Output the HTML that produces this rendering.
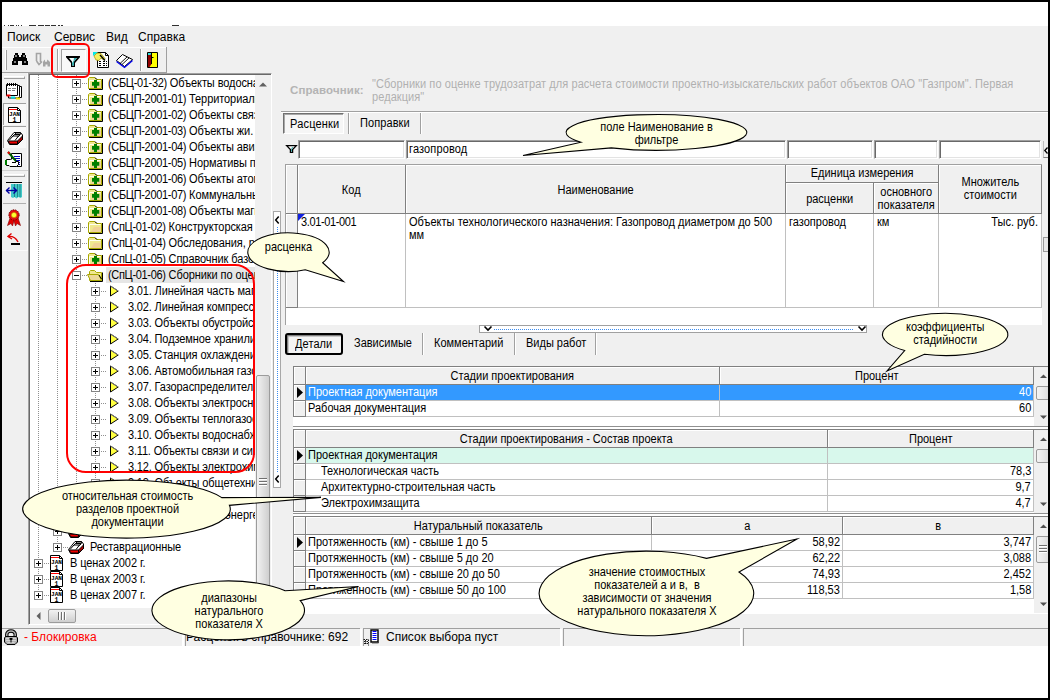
<!DOCTYPE html><html><head><meta charset="utf-8"><title>UI</title><style>
*{box-sizing:border-box;margin:0;padding:0}
html,body{width:1050px;height:700px;overflow:hidden;background:#fff}
body{position:relative;font-family:"Liberation Sans",sans-serif;font-size:11px;color:#000}
.a{position:absolute}
.t{position:absolute;white-space:nowrap;line-height:14px;height:14px}
.g{background:#f0f0f0}
.m{position:absolute;top:30px;font-size:12px;line-height:14px;white-space:nowrap;color:#000}
.tr{position:absolute;height:16px;line-height:16px;white-space:nowrap;font-size:12px;letter-spacing:-.09px;transform:scaleX(.9167);transform-origin:0 0}
.c{position:absolute;border-right:1px solid #c0c0c0;border-bottom:1px solid #c0c0c0;white-space:nowrap;overflow:hidden;line-height:13px;padding:1px 3px 0 3px;background:#fff}
.hd{background:#f0f0f0;text-align:center;padding-left:0;padding-right:0;border-color:#808080;box-shadow:inset 1px 1px 0 #fff}
.r{text-align:right}
.s{display:inline-block;font-size:12px;transform:scaleX(.9167);white-space:nowrap;vertical-align:top}
.x{font-size:12px;transform:scaleX(.9167);transform-origin:0 0}
.inp{position:absolute;background:#fff;border:1px solid #fff;border-top:1px solid #a0a0a0;border-left:1px solid #a0a0a0;box-shadow:inset 1px 1px 0 #696969,inset -1px -1px 0 #e3e3e3;height:19px;top:140px}
.co{position:absolute;text-align:center;line-height:13px;white-space:nowrap;font-size:11px}
svg{position:absolute;overflow:visible}
</style></head><body>
<div class="a g" style="left:2px;top:26px;width:1046px;height:620px"></div>
<div class="a" style="left:4px;top:25px;width:1px;height:1px;background:#303030"></div>
<div class="a" style="left:8px;top:25px;width:1px;height:1px;background:#303030"></div>
<div class="a" style="left:10px;top:25px;width:4px;height:1px;background:#303030"></div>
<div class="a" style="left:16px;top:25px;width:1px;height:1px;background:#303030"></div>
<div class="a" style="left:18px;top:25px;width:1px;height:1px;background:#303030"></div>
<div class="a" style="left:21px;top:25px;width:1px;height:1px;background:#303030"></div>
<div class="a" style="left:29px;top:25px;width:7px;height:1px;background:#303030"></div>
<div class="a" style="left:38px;top:25px;width:6px;height:1px;background:#303030"></div>
<div class="a" style="left:45px;top:25px;width:5px;height:1px;background:#303030"></div>
<div class="a" style="left:51px;top:25px;width:5px;height:1px;background:#303030"></div>
<div class="a" style="left:58px;top:25px;width:2px;height:1px;background:#303030"></div>
<div class="a" style="left:61px;top:25px;width:2px;height:1px;background:#303030"></div>
<div class="a" style="left:172px;top:25px;width:7px;height:1px;background:#303030"></div>
<div class="m" style="left:7px">Поиск</div>
<div class="m" style="left:54px">Сервис</div>
<div class="m" style="left:106px">Вид</div>
<div class="m" style="left:138px">Справка</div>
<div class="a" style="left:2px;top:47px;width:165px;height:1px;background:#fff"></div>
<div class="a" style="left:2px;top:72px;width:165px;height:1px;background:#a0a0a0"></div>
<div class="a" style="left:166px;top:47px;width:1px;height:26px;background:#a0a0a0"></div>
<div class="a" style="left:5px;top:50px;width:2px;height:20px;border-left:1px solid #fff;border-right:1px solid #a0a0a0"></div>
<div class="a" style="left:27px;top:73px;width:1px;height:178px;background:#fafafa"></div>
<div class="a" style="left:2px;top:250px;width:26px;height:1px;background:#fafafa"></div>
<div class="a" style="left:4px;top:76px;width:21px;height:3px;border-top:1px solid #fff;border-bottom:1px solid #a0a0a0;border-right:1px solid #a0a0a0"></div>
<svg class="a" style="left:6px;top:83px" width="17" height="17" viewBox="0 0 17 17" ><path d="M4.5 3.5H15.5V14.5H4.5Z" fill="#fff" stroke="#000"/><path d="M2.5 2.5H13.5V13.5L12 15H2.5Z" fill="#fff" stroke="#000"/><path d="M0.5 1.5H11.5V12.5H0.5Z" fill="#fff" stroke="#000"/><path d="M1.5 0v3M3.5 0v3M5.5 0v3M7.5 0v3M9.5 0v3" stroke="#000"/><path d="M2 5.5h3M6 5.5h4M2 7.5h3M6 7.5h3" stroke="#808080"/><path d="M0.5 11.5h4v2h-4z" fill="#f00000"/><path d="M5 13.5h4v2H5z" fill="#00e0e0"/><path d="M10 14.5h4v2h-4z" fill="#f0e000"/></svg>
<div class="a" style="left:3px;top:103px;width:23px;height:22px;background:#f8f8f8;border-left:1px solid #a0a0a0;border-top:1px solid #a0a0a0"></div>
<svg class="a" style="left:8px;top:107px" width="13" height="16" viewBox="0 0 13 16" ><path d="M0.5 0.5H9.5L12.5 3.5V15.5H0.5Z" fill="#fff" stroke="#000"/><path d="M9.5 0.5V3.5H12.5" fill="none" stroke="#000"/><path d="M1 2.5H9" stroke="#f00"/><text x="6.5" y="9" font-family="Liberation Mono,monospace" font-weight="bold" font-size="6" text-anchor="middle" textLength="11" lengthAdjust="spacingAndGlyphs">JAN</text><text x="6.5" y="14.5" font-family="Liberation Mono,monospace" font-weight="bold" font-size="6.5" text-anchor="middle">1</text></svg>
<div class="a" style="left:3px;top:126px;width:23px;height:22px;background:#f8f8f8;border-left:1px solid #a0a0a0;border-top:1px solid #a0a0a0"></div>
<svg class="a" style="left:7px;top:131px" width="16" height="14" viewBox="0 0 16 14" ><path d="M0.500 9.500L7 1.500h6.500l2 2.500v4.500l-5 5h-8z" fill="#fff" stroke="#000"/><path d="M1 10h9.500v3h-7.500z" fill="#f00000" stroke="#000"/><path d="M10.500 10l5-5v3.500l-5 4.500z" fill="#b00000" stroke="#000"/><path d="M2 9.500L6 5h5.500L8 9.500M5 6L7.500 3.500H13l-2.500 3M7.500 3.500L9 2h5l-2 3" stroke="#000" fill="none"/></svg>
<svg class="a" style="left:6px;top:151px" width="17" height="17" viewBox="0 0 17 17" ><path d="M5.5 2.5H15.5V15.5H5.5Z" fill="#fff" stroke="#000"/><path d="M8 5.5h6M8 7.5h6M8 9.5h6M10 11.5h4M10 13.5h4" stroke="#0000c0"/><path d="M0.5 8.5h4l2-1 3 1v2h3v3l-2 2H4l-1-1H0.5z" fill="#fff" stroke="#000"/><path d="M0 9v5" stroke="#008000" stroke-width="2"/><path d="M2 1l8 9" stroke="#006000" stroke-width="2"/><path d="M2 1l1.5 1.7" stroke="#f00000" stroke-width="2"/><path d="M6 11.5h4" stroke="#000"/></svg>
<div class="a" style="left:2px;top:170px;width:26px;height:1px;background:#d0d0d0"></div>
<div class="a" style="left:4px;top:174px;width:21px;height:3px;border-top:1px solid #fff;border-bottom:1px solid #a0a0a0;border-right:1px solid #a0a0a0"></div>
<svg class="a" style="left:6px;top:181px" width="17" height="18" viewBox="0 0 17 18" ><path d="M0 1.5H16" stroke="#000"/><path d="M5 3H16V16l-1.500 1-2-1-2 1.500-2-1.500-1.500 1-2-1z" fill="#40c8c8"/><path d="M8.500 3v13M11.500 3v13M14 3v13" stroke="#208888"/><path d="M0 9.500H11" stroke="#0000a0" stroke-width="1.4"/><path d="M3.500 6.500L0.500 9.500l3 3M7.500 6.500l3 3-3 3" fill="none" stroke="#0000a0" stroke-width="1.4"/></svg>
<div class="a" style="left:3px;top:203px;width:23px;height:1px;background:#b0b0b0"></div>
<svg class="a" style="left:7px;top:209px" width="14" height="18" viewBox="0 0 14 18" ><path d="M3 9L0.500 16.500l3.500-2 1.500 2.500L7 12l1.500 5 1.500-2.500 3.500 2L11 9z" fill="#e00000" stroke="#800000" stroke-width=".6"/><circle cx="7" cy="6" r="5.200" fill="#e01010" stroke="#700000" stroke-dasharray="1.500 1"/><circle cx="7" cy="6" r="2.600" fill="#ffff30" stroke="#c09000" stroke-width=".6"/></svg>
<svg class="a" style="left:7px;top:232px" width="14" height="14" viewBox="0 0 14 14" ><path d="M1 4.500C5 4 9 6 11 10" fill="none" stroke="#e00000" stroke-width="1.400"/><path d="M4.500 1.500L1 4.500l4 2.500" fill="none" stroke="#e00000" stroke-width="1.400"/><path d="M4 12h9" stroke="#000" stroke-width="2"/></svg>
<div class="a" style="left:28px;top:73px;width:244px;height:552px;background:#fff;border-left:1px solid #a0a0a0;border-top:1px solid #a0a0a0;border-right:1px solid #fff;border-bottom:1px solid #fff;box-shadow:inset 1px 1px 0 #696969"></div>
<div class="a" style="left:30px;top:75px;width:225px;height:533px;overflow:hidden">
<div class="a" style="left:8px;top:0px;width:1px;height:520px;background:repeating-linear-gradient(180deg,#909090 0 1px,transparent 1px 2px)"></div>
<div class="a" style="left:27px;top:0px;width:1px;height:472px;background:repeating-linear-gradient(180deg,#909090 0 1px,transparent 1px 2px)"></div>
<div class="a" style="left:46px;top:0px;width:1px;height:440px;background:repeating-linear-gradient(180deg,#909090 0 1px,transparent 1px 2px)"></div>
<div class="a" style="left:65px;top:208px;width:1px;height:216px;background:repeating-linear-gradient(180deg,#909090 0 1px,transparent 1px 2px)"></div>
<div class="a" style="left:52px;top:8px;width:6px;height:1px;background:repeating-linear-gradient(90deg,#909090 0 1px,transparent 1px 2px)"></div>
<div class="a" style="left:42px;top:4px;width:9px;height:9px;border:1px solid #848484;background:#fff"></div><div class="a" style="left:44px;top:8px;width:5px;height:1px;background:#000"></div><div class="a" style="left:46px;top:6px;width:1px;height:5px;background:#000"></div>
<svg class="a" style="left:58px;top:2px" width="16" height="16" viewBox="0 0 16 16" ><path d="M0.5 11.5V1.5L1.5 0.5H6.5L8.5 2.5H13.5V11.5Z" fill="#f0e890" stroke="#a8a800"/><path d="M1.5 3.5H12.5M1.5 3.5V11" stroke="#fffff0" fill="none"/><path d="M6 6h7v5H3z" fill="#f0b8a0" opacity=".45"/><path d="M7 0.5L9 2.5M14.5 2V12.5H1" fill="none" stroke="#000"/><path d="M6 3h3v2h2.3v3.7H9V11H6V8.7H4V5h2z" fill="#008000"/></svg>
<div class="tr" style="left:78px;top:0px"><span style="letter-spacing:-.35px">(СБЦ-01-32)</span> Объекты водоснабжения</div>
<div class="a" style="left:52px;top:24px;width:6px;height:1px;background:repeating-linear-gradient(90deg,#909090 0 1px,transparent 1px 2px)"></div>
<div class="a" style="left:42px;top:20px;width:9px;height:9px;border:1px solid #848484;background:#fff"></div><div class="a" style="left:44px;top:24px;width:5px;height:1px;background:#000"></div><div class="a" style="left:46px;top:22px;width:1px;height:5px;background:#000"></div>
<svg class="a" style="left:58px;top:18px" width="16" height="16" viewBox="0 0 16 16" ><path d="M0.5 11.5V1.5L1.5 0.5H6.5L8.5 2.5H13.5V11.5Z" fill="#f0e890" stroke="#a8a800"/><path d="M1.5 3.5H12.5M1.5 3.5V11" stroke="#fffff0" fill="none"/><path d="M6 6h7v5H3z" fill="#f0b8a0" opacity=".45"/><path d="M7 0.5L9 2.5M14.5 2V12.5H1" fill="none" stroke="#000"/><path d="M6 3h3v2h2.3v3.7H9V11H6V8.7H4V5h2z" fill="#008000"/></svg>
<div class="tr" style="left:78px;top:16px"><span style="letter-spacing:-.35px">(СБЦП-2001-01)</span> Территориальное планирование</div>
<div class="a" style="left:52px;top:40px;width:6px;height:1px;background:repeating-linear-gradient(90deg,#909090 0 1px,transparent 1px 2px)"></div>
<div class="a" style="left:42px;top:36px;width:9px;height:9px;border:1px solid #848484;background:#fff"></div><div class="a" style="left:44px;top:40px;width:5px;height:1px;background:#000"></div><div class="a" style="left:46px;top:38px;width:1px;height:5px;background:#000"></div>
<svg class="a" style="left:58px;top:34px" width="16" height="16" viewBox="0 0 16 16" ><path d="M0.5 11.5V1.5L1.5 0.5H6.5L8.5 2.5H13.5V11.5Z" fill="#f0e890" stroke="#a8a800"/><path d="M1.5 3.5H12.5M1.5 3.5V11" stroke="#fffff0" fill="none"/><path d="M6 6h7v5H3z" fill="#f0b8a0" opacity=".45"/><path d="M7 0.5L9 2.5M14.5 2V12.5H1" fill="none" stroke="#000"/><path d="M6 3h3v2h2.3v3.7H9V11H6V8.7H4V5h2z" fill="#008000"/></svg>
<div class="tr" style="left:78px;top:32px"><span style="letter-spacing:-.35px">(СБЦП-2001-02)</span> Объекты связи</div>
<div class="a" style="left:52px;top:56px;width:6px;height:1px;background:repeating-linear-gradient(90deg,#909090 0 1px,transparent 1px 2px)"></div>
<div class="a" style="left:42px;top:52px;width:9px;height:9px;border:1px solid #848484;background:#fff"></div><div class="a" style="left:44px;top:56px;width:5px;height:1px;background:#000"></div><div class="a" style="left:46px;top:54px;width:1px;height:5px;background:#000"></div>
<svg class="a" style="left:58px;top:50px" width="16" height="16" viewBox="0 0 16 16" ><path d="M0.5 11.5V1.5L1.5 0.5H6.5L8.5 2.5H13.5V11.5Z" fill="#f0e890" stroke="#a8a800"/><path d="M1.5 3.5H12.5M1.5 3.5V11" stroke="#fffff0" fill="none"/><path d="M6 6h7v5H3z" fill="#f0b8a0" opacity=".45"/><path d="M7 0.5L9 2.5M14.5 2V12.5H1" fill="none" stroke="#000"/><path d="M6 3h3v2h2.3v3.7H9V11H6V8.7H4V5h2z" fill="#008000"/></svg>
<div class="tr" style="left:78px;top:48px"><span style="letter-spacing:-.35px">(СБЦП-2001-03)</span> Объекты жи.</div>
<div class="a" style="left:52px;top:72px;width:6px;height:1px;background:repeating-linear-gradient(90deg,#909090 0 1px,transparent 1px 2px)"></div>
<div class="a" style="left:42px;top:68px;width:9px;height:9px;border:1px solid #848484;background:#fff"></div><div class="a" style="left:44px;top:72px;width:5px;height:1px;background:#000"></div><div class="a" style="left:46px;top:70px;width:1px;height:5px;background:#000"></div>
<svg class="a" style="left:58px;top:66px" width="16" height="16" viewBox="0 0 16 16" ><path d="M0.5 11.5V1.5L1.5 0.5H6.5L8.5 2.5H13.5V11.5Z" fill="#f0e890" stroke="#a8a800"/><path d="M1.5 3.5H12.5M1.5 3.5V11" stroke="#fffff0" fill="none"/><path d="M6 6h7v5H3z" fill="#f0b8a0" opacity=".45"/><path d="M7 0.5L9 2.5M14.5 2V12.5H1" fill="none" stroke="#000"/><path d="M6 3h3v2h2.3v3.7H9V11H6V8.7H4V5h2z" fill="#008000"/></svg>
<div class="tr" style="left:78px;top:64px"><span style="letter-spacing:-.35px">(СБЦП-2001-04)</span> Объекты авиационной</div>
<div class="a" style="left:52px;top:88px;width:6px;height:1px;background:repeating-linear-gradient(90deg,#909090 0 1px,transparent 1px 2px)"></div>
<div class="a" style="left:42px;top:84px;width:9px;height:9px;border:1px solid #848484;background:#fff"></div><div class="a" style="left:44px;top:88px;width:5px;height:1px;background:#000"></div><div class="a" style="left:46px;top:86px;width:1px;height:5px;background:#000"></div>
<svg class="a" style="left:58px;top:82px" width="16" height="16" viewBox="0 0 16 16" ><path d="M0.5 11.5V1.5L1.5 0.5H6.5L8.5 2.5H13.5V11.5Z" fill="#f0e890" stroke="#a8a800"/><path d="M1.5 3.5H12.5M1.5 3.5V11" stroke="#fffff0" fill="none"/><path d="M6 6h7v5H3z" fill="#f0b8a0" opacity=".45"/><path d="M7 0.5L9 2.5M14.5 2V12.5H1" fill="none" stroke="#000"/><path d="M6 3h3v2h2.3v3.7H9V11H6V8.7H4V5h2z" fill="#008000"/></svg>
<div class="tr" style="left:78px;top:80px"><span style="letter-spacing:-.35px">(СБЦП-2001-05)</span> Нормативы подготовки</div>
<div class="a" style="left:52px;top:104px;width:6px;height:1px;background:repeating-linear-gradient(90deg,#909090 0 1px,transparent 1px 2px)"></div>
<div class="a" style="left:42px;top:100px;width:9px;height:9px;border:1px solid #848484;background:#fff"></div><div class="a" style="left:44px;top:104px;width:5px;height:1px;background:#000"></div><div class="a" style="left:46px;top:102px;width:1px;height:5px;background:#000"></div>
<svg class="a" style="left:58px;top:98px" width="16" height="16" viewBox="0 0 16 16" ><path d="M0.5 11.5V1.5L1.5 0.5H6.5L8.5 2.5H13.5V11.5Z" fill="#f0e890" stroke="#a8a800"/><path d="M1.5 3.5H12.5M1.5 3.5V11" stroke="#fffff0" fill="none"/><path d="M6 6h7v5H3z" fill="#f0b8a0" opacity=".45"/><path d="M7 0.5L9 2.5M14.5 2V12.5H1" fill="none" stroke="#000"/><path d="M6 3h3v2h2.3v3.7H9V11H6V8.7H4V5h2z" fill="#008000"/></svg>
<div class="tr" style="left:78px;top:96px"><span style="letter-spacing:-.35px">(СБЦП-2001-06)</span> Объекты атомной</div>
<div class="a" style="left:52px;top:120px;width:6px;height:1px;background:repeating-linear-gradient(90deg,#909090 0 1px,transparent 1px 2px)"></div>
<div class="a" style="left:42px;top:116px;width:9px;height:9px;border:1px solid #848484;background:#fff"></div><div class="a" style="left:44px;top:120px;width:5px;height:1px;background:#000"></div><div class="a" style="left:46px;top:118px;width:1px;height:5px;background:#000"></div>
<svg class="a" style="left:58px;top:114px" width="16" height="16" viewBox="0 0 16 16" ><path d="M0.5 11.5V1.5L1.5 0.5H6.5L8.5 2.5H13.5V11.5Z" fill="#f0e890" stroke="#a8a800"/><path d="M1.5 3.5H12.5M1.5 3.5V11" stroke="#fffff0" fill="none"/><path d="M6 6h7v5H3z" fill="#f0b8a0" opacity=".45"/><path d="M7 0.5L9 2.5M14.5 2V12.5H1" fill="none" stroke="#000"/><path d="M6 3h3v2h2.3v3.7H9V11H6V8.7H4V5h2z" fill="#008000"/></svg>
<div class="tr" style="left:78px;top:112px"><span style="letter-spacing:-.35px">(СБЦП-2001-07)</span> Коммунальные инженерные</div>
<div class="a" style="left:52px;top:136px;width:6px;height:1px;background:repeating-linear-gradient(90deg,#909090 0 1px,transparent 1px 2px)"></div>
<div class="a" style="left:42px;top:132px;width:9px;height:9px;border:1px solid #848484;background:#fff"></div><div class="a" style="left:44px;top:136px;width:5px;height:1px;background:#000"></div><div class="a" style="left:46px;top:134px;width:1px;height:5px;background:#000"></div>
<svg class="a" style="left:58px;top:130px" width="16" height="16" viewBox="0 0 16 16" ><path d="M0.5 11.5V1.5L1.5 0.5H6.5L8.5 2.5H13.5V11.5Z" fill="#f0e890" stroke="#a8a800"/><path d="M1.5 3.5H12.5M1.5 3.5V11" stroke="#fffff0" fill="none"/><path d="M6 6h7v5H3z" fill="#f0b8a0" opacity=".45"/><path d="M7 0.5L9 2.5M14.5 2V12.5H1" fill="none" stroke="#000"/><path d="M6 3h3v2h2.3v3.7H9V11H6V8.7H4V5h2z" fill="#008000"/></svg>
<div class="tr" style="left:78px;top:128px"><span style="letter-spacing:-.35px">(СБЦП-2001-08)</span> Объекты магистрального</div>
<div class="a" style="left:52px;top:152px;width:6px;height:1px;background:repeating-linear-gradient(90deg,#909090 0 1px,transparent 1px 2px)"></div>
<div class="a" style="left:42px;top:148px;width:9px;height:9px;border:1px solid #848484;background:#fff"></div><div class="a" style="left:44px;top:152px;width:5px;height:1px;background:#000"></div><div class="a" style="left:46px;top:150px;width:1px;height:5px;background:#000"></div>
<svg class="a" style="left:58px;top:146px" width="16" height="16" viewBox="0 0 16 16" ><path d="M0.5 11.5V1.5L1.5 0.5H6.5L8.5 2.5H13.5V11.5Z" fill="#f0e890" stroke="#a8a800"/><path d="M1.5 3.5H12.5M1.5 3.5V11" stroke="#fffff0" fill="none"/><path d="M6 6h7v5H3z" fill="#f0b8a0" opacity=".45"/><path d="M7 0.5L9 2.5M14.5 2V12.5H1" fill="none" stroke="#000"/></svg>
<div class="tr" style="left:78px;top:144px"><span style="letter-spacing:-.35px">(СпЦ-01-02)</span> Конструкторская документация</div>
<div class="a" style="left:52px;top:168px;width:6px;height:1px;background:repeating-linear-gradient(90deg,#909090 0 1px,transparent 1px 2px)"></div>
<div class="a" style="left:42px;top:164px;width:9px;height:9px;border:1px solid #848484;background:#fff"></div><div class="a" style="left:44px;top:168px;width:5px;height:1px;background:#000"></div><div class="a" style="left:46px;top:166px;width:1px;height:5px;background:#000"></div>
<svg class="a" style="left:58px;top:162px" width="16" height="16" viewBox="0 0 16 16" ><path d="M0.5 11.5V1.5L1.5 0.5H6.5L8.5 2.5H13.5V11.5Z" fill="#f0e890" stroke="#a8a800"/><path d="M1.5 3.5H12.5M1.5 3.5V11" stroke="#fffff0" fill="none"/><path d="M6 6h7v5H3z" fill="#f0b8a0" opacity=".45"/><path d="M7 0.5L9 2.5M14.5 2V12.5H1" fill="none" stroke="#000"/></svg>
<div class="tr" style="left:78px;top:160px"><span style="letter-spacing:-.35px">(СпЦ-01-04)</span> Обследования, работы</div>
<div class="a" style="left:52px;top:184px;width:6px;height:1px;background:repeating-linear-gradient(90deg,#909090 0 1px,transparent 1px 2px)"></div>
<div class="a" style="left:42px;top:180px;width:9px;height:9px;border:1px solid #848484;background:#fff"></div><div class="a" style="left:44px;top:184px;width:5px;height:1px;background:#000"></div><div class="a" style="left:46px;top:182px;width:1px;height:5px;background:#000"></div>
<svg class="a" style="left:58px;top:178px" width="16" height="16" viewBox="0 0 16 16" ><path d="M0.5 11.5V1.5L1.5 0.5H6.5L8.5 2.5H13.5V11.5Z" fill="#f0e890" stroke="#a8a800"/><path d="M1.5 3.5H12.5M1.5 3.5V11" stroke="#fffff0" fill="none"/><path d="M6 6h7v5H3z" fill="#f0b8a0" opacity=".45"/><path d="M7 0.5L9 2.5M14.5 2V12.5H1" fill="none" stroke="#000"/><path d="M6 3h3v2h2.3v3.7H9V11H6V8.7H4V5h2z" fill="#008000"/></svg>
<div class="tr" style="left:78px;top:176px"><span style="letter-spacing:-.35px">(СпЦ-01-05)</span> Справочник базовых цен</div>
<div class="a" style="left:76px;top:192px;width:200px;height:16px;background:#e6e6e6"></div>
<div class="a" style="left:52px;top:200px;width:6px;height:1px;background:repeating-linear-gradient(90deg,#909090 0 1px,transparent 1px 2px)"></div>
<div class="a" style="left:42px;top:196px;width:9px;height:9px;border:1px solid #848484;background:#fff"></div><div class="a" style="left:44px;top:200px;width:5px;height:1px;background:#000"></div>
<svg class="a" style="left:57px;top:193px" width="17" height="16" viewBox="0 0 17 16" ><path d="M2.5 12.5V3.5L3.5 2.5H7.5L9.5 4.5H14.5V12.5Z" fill="#f0e890" stroke="#a8a800"/><path d="M0.5 6.5H11.5L14.5 12.5H3.5Z" fill="#ecd898" stroke="#a8a800"/><path d="M15.5 4.5V13.5H3" fill="none" stroke="#000"/><path d="M12 7l2.5 4" stroke="#000"/></svg>
<div class="tr" style="left:78px;top:192px"><span style="letter-spacing:-.35px">(СпЦ-01-06)</span> Сборники по оценке трудозатрат</div>
<div class="a" style="left:71px;top:216px;width:6px;height:1px;background:repeating-linear-gradient(90deg,#909090 0 1px,transparent 1px 2px)"></div>
<div class="a" style="left:61px;top:212px;width:9px;height:9px;border:1px solid #848484;background:#fff"></div><div class="a" style="left:63px;top:216px;width:5px;height:1px;background:#000"></div><div class="a" style="left:65px;top:214px;width:1px;height:5px;background:#000"></div>
<svg class="a" style="left:79px;top:210px" width="11" height="12" viewBox="0 0 11 12" ><path d="M1.500 1L9.200 6 1.500 11Z" fill="#ffff40" stroke="#000"/><path d="M1.500 1L9.200 6" stroke="#808080"/></svg>
<div class="tr" style="left:98px;top:208px"><span style="letter-spacing:-.2px">3.01.</span> Линейная часть магистральных</div>
<div class="a" style="left:71px;top:232px;width:6px;height:1px;background:repeating-linear-gradient(90deg,#909090 0 1px,transparent 1px 2px)"></div>
<div class="a" style="left:61px;top:228px;width:9px;height:9px;border:1px solid #848484;background:#fff"></div><div class="a" style="left:63px;top:232px;width:5px;height:1px;background:#000"></div><div class="a" style="left:65px;top:230px;width:1px;height:5px;background:#000"></div>
<svg class="a" style="left:79px;top:226px" width="11" height="12" viewBox="0 0 11 12" ><path d="M1.500 1L9.200 6 1.500 11Z" fill="#ffff40" stroke="#000"/><path d="M1.500 1L9.200 6" stroke="#808080"/></svg>
<div class="tr" style="left:98px;top:224px"><span style="letter-spacing:-.2px">3.02.</span> Линейная компрессорная станция</div>
<div class="a" style="left:71px;top:248px;width:6px;height:1px;background:repeating-linear-gradient(90deg,#909090 0 1px,transparent 1px 2px)"></div>
<div class="a" style="left:61px;top:244px;width:9px;height:9px;border:1px solid #848484;background:#fff"></div><div class="a" style="left:63px;top:248px;width:5px;height:1px;background:#000"></div><div class="a" style="left:65px;top:246px;width:1px;height:5px;background:#000"></div>
<svg class="a" style="left:79px;top:242px" width="11" height="12" viewBox="0 0 11 12" ><path d="M1.500 1L9.200 6 1.500 11Z" fill="#ffff40" stroke="#000"/><path d="M1.500 1L9.200 6" stroke="#808080"/></svg>
<div class="tr" style="left:98px;top:240px"><span style="letter-spacing:-.2px">3.03.</span> Объекты обустройства</div>
<div class="a" style="left:71px;top:264px;width:6px;height:1px;background:repeating-linear-gradient(90deg,#909090 0 1px,transparent 1px 2px)"></div>
<div class="a" style="left:61px;top:260px;width:9px;height:9px;border:1px solid #848484;background:#fff"></div><div class="a" style="left:63px;top:264px;width:5px;height:1px;background:#000"></div><div class="a" style="left:65px;top:262px;width:1px;height:5px;background:#000"></div>
<svg class="a" style="left:79px;top:258px" width="11" height="12" viewBox="0 0 11 12" ><path d="M1.500 1L9.200 6 1.500 11Z" fill="#ffff40" stroke="#000"/><path d="M1.500 1L9.200 6" stroke="#808080"/></svg>
<div class="tr" style="left:98px;top:256px"><span style="letter-spacing:-.2px">3.04.</span> Подземное хранилище газа</div>
<div class="a" style="left:71px;top:280px;width:6px;height:1px;background:repeating-linear-gradient(90deg,#909090 0 1px,transparent 1px 2px)"></div>
<div class="a" style="left:61px;top:276px;width:9px;height:9px;border:1px solid #848484;background:#fff"></div><div class="a" style="left:63px;top:280px;width:5px;height:1px;background:#000"></div><div class="a" style="left:65px;top:278px;width:1px;height:5px;background:#000"></div>
<svg class="a" style="left:79px;top:274px" width="11" height="12" viewBox="0 0 11 12" ><path d="M1.500 1L9.200 6 1.500 11Z" fill="#ffff40" stroke="#000"/><path d="M1.500 1L9.200 6" stroke="#808080"/></svg>
<div class="tr" style="left:98px;top:272px"><span style="letter-spacing:-.2px">3.05.</span> Станция охлаждения газа</div>
<div class="a" style="left:71px;top:296px;width:6px;height:1px;background:repeating-linear-gradient(90deg,#909090 0 1px,transparent 1px 2px)"></div>
<div class="a" style="left:61px;top:292px;width:9px;height:9px;border:1px solid #848484;background:#fff"></div><div class="a" style="left:63px;top:296px;width:5px;height:1px;background:#000"></div><div class="a" style="left:65px;top:294px;width:1px;height:5px;background:#000"></div>
<svg class="a" style="left:79px;top:290px" width="11" height="12" viewBox="0 0 11 12" ><path d="M1.500 1L9.200 6 1.500 11Z" fill="#ffff40" stroke="#000"/><path d="M1.500 1L9.200 6" stroke="#808080"/></svg>
<div class="tr" style="left:98px;top:288px"><span style="letter-spacing:-.2px">3.06.</span> Автомобильная газонаполнительная</div>
<div class="a" style="left:71px;top:312px;width:6px;height:1px;background:repeating-linear-gradient(90deg,#909090 0 1px,transparent 1px 2px)"></div>
<div class="a" style="left:61px;top:308px;width:9px;height:9px;border:1px solid #848484;background:#fff"></div><div class="a" style="left:63px;top:312px;width:5px;height:1px;background:#000"></div><div class="a" style="left:65px;top:310px;width:1px;height:5px;background:#000"></div>
<svg class="a" style="left:79px;top:306px" width="11" height="12" viewBox="0 0 11 12" ><path d="M1.500 1L9.200 6 1.500 11Z" fill="#ffff40" stroke="#000"/><path d="M1.500 1L9.200 6" stroke="#808080"/></svg>
<div class="tr" style="left:98px;top:304px"><span style="letter-spacing:-.2px">3.07.</span> Газораспределительные станции</div>
<div class="a" style="left:71px;top:328px;width:6px;height:1px;background:repeating-linear-gradient(90deg,#909090 0 1px,transparent 1px 2px)"></div>
<div class="a" style="left:61px;top:324px;width:9px;height:9px;border:1px solid #848484;background:#fff"></div><div class="a" style="left:63px;top:328px;width:5px;height:1px;background:#000"></div><div class="a" style="left:65px;top:326px;width:1px;height:5px;background:#000"></div>
<svg class="a" style="left:79px;top:322px" width="11" height="12" viewBox="0 0 11 12" ><path d="M1.500 1L9.200 6 1.500 11Z" fill="#ffff40" stroke="#000"/><path d="M1.500 1L9.200 6" stroke="#808080"/></svg>
<div class="tr" style="left:98px;top:320px"><span style="letter-spacing:-.2px">3.08.</span> Объекты электроснабжения</div>
<div class="a" style="left:71px;top:344px;width:6px;height:1px;background:repeating-linear-gradient(90deg,#909090 0 1px,transparent 1px 2px)"></div>
<div class="a" style="left:61px;top:340px;width:9px;height:9px;border:1px solid #848484;background:#fff"></div><div class="a" style="left:63px;top:344px;width:5px;height:1px;background:#000"></div><div class="a" style="left:65px;top:342px;width:1px;height:5px;background:#000"></div>
<svg class="a" style="left:79px;top:338px" width="11" height="12" viewBox="0 0 11 12" ><path d="M1.500 1L9.200 6 1.500 11Z" fill="#ffff40" stroke="#000"/><path d="M1.500 1L9.200 6" stroke="#808080"/></svg>
<div class="tr" style="left:98px;top:336px"><span style="letter-spacing:-.2px">3.09.</span> Объекты теплогазоснабжения</div>
<div class="a" style="left:71px;top:360px;width:6px;height:1px;background:repeating-linear-gradient(90deg,#909090 0 1px,transparent 1px 2px)"></div>
<div class="a" style="left:61px;top:356px;width:9px;height:9px;border:1px solid #848484;background:#fff"></div><div class="a" style="left:63px;top:360px;width:5px;height:1px;background:#000"></div><div class="a" style="left:65px;top:358px;width:1px;height:5px;background:#000"></div>
<svg class="a" style="left:79px;top:354px" width="11" height="12" viewBox="0 0 11 12" ><path d="M1.500 1L9.200 6 1.500 11Z" fill="#ffff40" stroke="#000"/><path d="M1.500 1L9.200 6" stroke="#808080"/></svg>
<div class="tr" style="left:98px;top:352px"><span style="letter-spacing:-.2px">3.10.</span> Объекты водоснабжения</div>
<div class="a" style="left:71px;top:376px;width:6px;height:1px;background:repeating-linear-gradient(90deg,#909090 0 1px,transparent 1px 2px)"></div>
<div class="a" style="left:61px;top:372px;width:9px;height:9px;border:1px solid #848484;background:#fff"></div><div class="a" style="left:63px;top:376px;width:5px;height:1px;background:#000"></div><div class="a" style="left:65px;top:374px;width:1px;height:5px;background:#000"></div>
<svg class="a" style="left:79px;top:370px" width="11" height="12" viewBox="0 0 11 12" ><path d="M1.500 1L9.200 6 1.500 11Z" fill="#ffff40" stroke="#000"/><path d="M1.500 1L9.200 6" stroke="#808080"/></svg>
<div class="tr" style="left:98px;top:368px"><span style="letter-spacing:-.2px">3.11.</span> Объекты связи и сигнализации</div>
<div class="a" style="left:71px;top:392px;width:6px;height:1px;background:repeating-linear-gradient(90deg,#909090 0 1px,transparent 1px 2px)"></div>
<div class="a" style="left:61px;top:388px;width:9px;height:9px;border:1px solid #848484;background:#fff"></div><div class="a" style="left:63px;top:392px;width:5px;height:1px;background:#000"></div><div class="a" style="left:65px;top:390px;width:1px;height:5px;background:#000"></div>
<svg class="a" style="left:79px;top:386px" width="11" height="12" viewBox="0 0 11 12" ><path d="M1.500 1L9.200 6 1.500 11Z" fill="#ffff40" stroke="#000"/><path d="M1.500 1L9.200 6" stroke="#808080"/></svg>
<div class="tr" style="left:98px;top:384px"><span style="letter-spacing:-.2px">3.12.</span> Объекты электрохимзащиты</div>
<div class="a" style="left:71px;top:408px;width:6px;height:1px;background:repeating-linear-gradient(90deg,#909090 0 1px,transparent 1px 2px)"></div>
<div class="a" style="left:61px;top:404px;width:9px;height:9px;border:1px solid #848484;background:#fff"></div><div class="a" style="left:63px;top:408px;width:5px;height:1px;background:#000"></div><div class="a" style="left:65px;top:406px;width:1px;height:5px;background:#000"></div>
<svg class="a" style="left:79px;top:402px" width="11" height="12" viewBox="0 0 11 12" ><path d="M1.500 1L9.200 6 1.500 11Z" fill="#ffff40" stroke="#000"/><path d="M1.500 1L9.200 6" stroke="#808080"/></svg>
<div class="tr" style="left:98px;top:400px"><span style="letter-spacing:-.2px">3.13.</span> Объекты общетехнического</div>
<div class="a" style="left:71px;top:424px;width:6px;height:1px;background:repeating-linear-gradient(90deg,#909090 0 1px,transparent 1px 2px)"></div>
<div class="a" style="left:61px;top:420px;width:9px;height:9px;border:1px solid #848484;background:#fff"></div><div class="a" style="left:63px;top:424px;width:5px;height:1px;background:#000"></div><div class="a" style="left:65px;top:422px;width:1px;height:5px;background:#000"></div>
<svg class="a" style="left:79px;top:418px" width="11" height="12" viewBox="0 0 11 12" ><path d="M1.500 1L9.200 6 1.500 11Z" fill="#ffff40" stroke="#000"/><path d="M1.500 1L9.200 6" stroke="#808080"/></svg>
<div class="tr" style="left:98px;top:416px"><span style="letter-spacing:-.2px">3.14.</span> Прочие</div>
<div class="a" style="left:52px;top:440px;width:6px;height:1px;background:repeating-linear-gradient(90deg,#909090 0 1px,transparent 1px 2px)"></div>
<div class="a" style="left:42px;top:436px;width:9px;height:9px;border:1px solid #848484;background:#fff"></div><div class="a" style="left:44px;top:440px;width:5px;height:1px;background:#000"></div><div class="a" style="left:46px;top:438px;width:1px;height:5px;background:#000"></div>
<svg class="a" style="left:58px;top:434px" width="16" height="16" viewBox="0 0 16 16" ><path d="M0.5 11.5V1.5L1.5 0.5H6.5L8.5 2.5H13.5V11.5Z" fill="#f0e890" stroke="#a8a800"/><path d="M1.5 3.5H12.5M1.5 3.5V11" stroke="#fffff0" fill="none"/><path d="M6 6h7v5H3z" fill="#f0b8a0" opacity=".45"/><path d="M7 0.5L9 2.5M14.5 2V12.5H1" fill="none" stroke="#000"/><path d="M6 3h3v2h2.3v3.7H9V11H6V8.7H4V5h2z" fill="#008000"/></svg>
<div class="tr" style="left:78px;top:432px"><span style="display:inline-block;width:128px;letter-spacing:-.3px">(СпЦ-01-07) Объекты</span>энергетики</div>
<div class="a" style="left:33px;top:456px;width:6px;height:1px;background:repeating-linear-gradient(90deg,#909090 0 1px,transparent 1px 2px)"></div>
<div class="a" style="left:23px;top:452px;width:9px;height:9px;border:1px solid #848484;background:#fff"></div><div class="a" style="left:25px;top:456px;width:5px;height:1px;background:#000"></div><div class="a" style="left:27px;top:454px;width:1px;height:5px;background:#000"></div>
<svg class="a" style="left:38px;top:449px" width="16" height="14" viewBox="0 0 16 14" ><path d="M0.500 9.500L7 1.500h6.500l2 2.500v4.500l-5 5h-8z" fill="#fff" stroke="#000"/><path d="M1 10h9.500v3h-7.500z" fill="#f00000" stroke="#000"/><path d="M10.500 10l5-5v3.500l-5 4.500z" fill="#b00000" stroke="#000"/><path d="M2 9.500L6 5h5.500L8 9.500M5 6L7.500 3.500H13l-2.500 3M7.500 3.500L9 2h5l-2 3" stroke="#000" fill="none"/></svg>
<div class="tr" style="left:60px;top:448px">Ремонтные</div>
<div class="a" style="left:33px;top:472px;width:6px;height:1px;background:repeating-linear-gradient(90deg,#909090 0 1px,transparent 1px 2px)"></div>
<div class="a" style="left:23px;top:468px;width:9px;height:9px;border:1px solid #848484;background:#fff"></div><div class="a" style="left:25px;top:472px;width:5px;height:1px;background:#000"></div><div class="a" style="left:27px;top:470px;width:1px;height:5px;background:#000"></div>
<svg class="a" style="left:38px;top:465px" width="16" height="14" viewBox="0 0 16 14" ><path d="M0.500 9.500L7 1.500h6.500l2 2.500v4.500l-5 5h-8z" fill="#fff" stroke="#000"/><path d="M1 10h9.500v3h-7.500z" fill="#f00000" stroke="#000"/><path d="M10.500 10l5-5v3.500l-5 4.500z" fill="#b00000" stroke="#000"/><path d="M2 9.500L6 5h5.500L8 9.500M5 6L7.500 3.500H13l-2.500 3M7.500 3.500L9 2h5l-2 3" stroke="#000" fill="none"/></svg>
<div class="tr" style="left:60px;top:464px">Реставрационные</div>
<div class="a" style="left:14px;top:488px;width:6px;height:1px;background:repeating-linear-gradient(90deg,#909090 0 1px,transparent 1px 2px)"></div>
<div class="a" style="left:4px;top:484px;width:9px;height:9px;border:1px solid #848484;background:#fff"></div><div class="a" style="left:6px;top:488px;width:5px;height:1px;background:#000"></div><div class="a" style="left:8px;top:486px;width:1px;height:5px;background:#000"></div>
<svg class="a" style="left:20px;top:480px" width="13" height="16" viewBox="0 0 13 16" ><path d="M0.5 0.5H9.5L12.5 3.5V15.5H0.5Z" fill="#fff" stroke="#000"/><path d="M9.5 0.5V3.5H12.5" fill="none" stroke="#000"/><path d="M1 2.5H9" stroke="#f00"/><text x="6.5" y="9" font-family="Liberation Mono,monospace" font-weight="bold" font-size="6" text-anchor="middle" textLength="11" lengthAdjust="spacingAndGlyphs">JAN</text><text x="6.5" y="14.5" font-family="Liberation Mono,monospace" font-weight="bold" font-size="6.5" text-anchor="middle">1</text></svg>
<div class="tr" style="left:40px;top:480px">В ценах 2002 г.</div>
<div class="a" style="left:14px;top:504px;width:6px;height:1px;background:repeating-linear-gradient(90deg,#909090 0 1px,transparent 1px 2px)"></div>
<div class="a" style="left:4px;top:500px;width:9px;height:9px;border:1px solid #848484;background:#fff"></div><div class="a" style="left:6px;top:504px;width:5px;height:1px;background:#000"></div><div class="a" style="left:8px;top:502px;width:1px;height:5px;background:#000"></div>
<svg class="a" style="left:20px;top:496px" width="13" height="16" viewBox="0 0 13 16" ><path d="M0.5 0.5H9.5L12.5 3.5V15.5H0.5Z" fill="#fff" stroke="#000"/><path d="M9.5 0.5V3.5H12.5" fill="none" stroke="#000"/><path d="M1 2.5H9" stroke="#f00"/><text x="6.5" y="9" font-family="Liberation Mono,monospace" font-weight="bold" font-size="6" text-anchor="middle" textLength="11" lengthAdjust="spacingAndGlyphs">JAN</text><text x="6.5" y="14.5" font-family="Liberation Mono,monospace" font-weight="bold" font-size="6.5" text-anchor="middle">1</text></svg>
<div class="tr" style="left:40px;top:496px">В ценах 2003 г.</div>
<div class="a" style="left:14px;top:520px;width:6px;height:1px;background:repeating-linear-gradient(90deg,#909090 0 1px,transparent 1px 2px)"></div>
<div class="a" style="left:4px;top:516px;width:9px;height:9px;border:1px solid #848484;background:#fff"></div><div class="a" style="left:6px;top:520px;width:5px;height:1px;background:#000"></div><div class="a" style="left:8px;top:518px;width:1px;height:5px;background:#000"></div>
<svg class="a" style="left:20px;top:512px" width="13" height="16" viewBox="0 0 13 16" ><path d="M0.5 0.5H9.5L12.5 3.5V15.5H0.5Z" fill="#fff" stroke="#000"/><path d="M9.5 0.5V3.5H12.5" fill="none" stroke="#000"/><path d="M1 2.5H9" stroke="#f00"/><text x="6.5" y="9" font-family="Liberation Mono,monospace" font-weight="bold" font-size="6" text-anchor="middle" textLength="11" lengthAdjust="spacingAndGlyphs">JAN</text><text x="6.5" y="14.5" font-family="Liberation Mono,monospace" font-weight="bold" font-size="6.5" text-anchor="middle">1</text></svg>
<div class="tr" style="left:40px;top:512px">В ценах 2007 г.</div>
</div>
<div class="a" style="left:255px;top:75px;width:16px;height:533px;background:#f0f0f0"></div>
<svg class="a" style="left:259px;top:82px" width="8" height="5" viewBox="0 0 8 5" ><path d="M0 4.5L4 0.5 8 4.500Z" fill="#606060"/></svg>
<div class="a" style="left:256px;top:375px;width:14px;height:216px;background:linear-gradient(90deg,#f2f2f2,#cfcfcf);border:1px solid #9c9c9c;border-radius:2px"></div>
<div class="a" style="left:259px;top:478px;width:8px;height:2px;background:#707070;border-bottom:1px solid #fff"></div>
<div class="a" style="left:259px;top:481px;width:8px;height:2px;background:#707070;border-bottom:1px solid #fff"></div>
<div class="a" style="left:259px;top:484px;width:8px;height:2px;background:#707070;border-bottom:1px solid #fff"></div>
<div class="a" style="left:30px;top:608px;width:241px;height:16px;background:#f0f0f0"></div>
<svg class="a" style="left:36px;top:612px" width="5" height="8" viewBox="0 0 5 8" ><path d="M4.500 0L0.500 4 4.500 8Z" fill="#606060"/></svg>
<div class="a" style="left:48px;top:609px;width:28px;height:14px;background:linear-gradient(180deg,#f2f2f2,#cfcfcf);border:1px solid #9c9c9c;border-radius:2px"></div>
<div class="a" style="left:58px;top:612px;width:2px;height:8px;background:#707070;border-right:1px solid #fff"></div>
<div class="a" style="left:61px;top:612px;width:2px;height:8px;background:#707070;border-right:1px solid #fff"></div>
<div class="a" style="left:64px;top:612px;width:2px;height:8px;background:#707070;border-right:1px solid #fff"></div>
<div class="a" style="left:273px;top:211px;width:8px;height:277px;background:#fff;border:1px solid #a8a8a8"></div>
<div class="a" style="left:277px;top:227px;width:1px;height:245px;background:repeating-linear-gradient(180deg,#3c8cf0 0 1px,transparent 1px 2px)"></div>
<svg class="a" style="left:275px;top:216px" width="4" height="8" viewBox="0 0 4 8" ><path d="M3.700 0.500L0.700 4 3.700 7.500" fill="none" stroke="#000" stroke-width="1.500"/></svg>
<svg class="a" style="left:275px;top:475px" width="4" height="8" viewBox="0 0 4 8" ><path d="M3.700 0.500L0.700 4 3.700 7.500" fill="none" stroke="#000" stroke-width="1.500"/></svg>
<div class="a" style="left:66px;top:264px;width:189px;height:209px;border:2px solid #ff0000;border-radius:20px"></div>
<svg class="a" style="left:12px;top:53px" width="16" height="13" viewBox="0 0 16 13" ><path d="M3 0h3v2h1v2h2V2h1V0h3v2h1v3h1v3h1v4H10V8H6v4H0V8h1V5h1V2h1z" fill="#000"/><path d="M2 9h2M12 9h2M4 2v2M12 2v2" stroke="#fff" fill="none"/></svg>
<svg class="a" style="left:35px;top:52px" width="16" height="15" viewBox="0 0 16 15" ><path d="M1.500 9V1.500h4V10M1.500 9l2.500 3.500 3-3" stroke="#a4a4a4" stroke-width="1.600" fill="none"/><path d="M8 10l1.500-2.500 1 2.500h1l1-2.500L15 10v4.500h-2.500v-2h-2v2H8z" fill="#a4a4a4"/></svg>
<div class="a" style="left:57px;top:49px;width:2px;height:22px;border-left:1px solid #a0a0a0;border-right:1px solid #fff"></div>
<div class="a" style="left:61px;top:49px;width:25px;height:23px;background:#f8f8f8;border-left:1px solid #a0a0a0;border-top:1px solid #a0a0a0;border-right:1px solid #fff;border-bottom:1px solid #fff"></div>
<svg class="a" style="left:66px;top:56px" width="14" height="11" viewBox="0 0 14 11" ><path d="M0 0H14V1.300L9 7V11H5V7L0 1.300Z" fill="#000"/><path d="M3 2H11L8 5.500V9.500H6V5.500Z" fill="#f4ffff"/><path d="M8 2H11L8 5.500V9.500H6V7L7.500 5Z" fill="#30a8a8"/></svg>
<svg class="a" style="left:93px;top:52px" width="17" height="16" viewBox="0 0 17 16" ><path d="M4.500 0.500H12.500L15.500 3.500V15.500H4.500Z" fill="#fff" stroke="#000"/><path d="M12.500 0.500V3.500H15.500" fill="none" stroke="#000"/><path d="M6 9.500h3M10 9.500h4M6 11.500h3M10 11.500h4M6 13.500h3M10 13.500h4" stroke="#000" stroke-dasharray="2 1"/><path d="M0 0h5L0 4z" fill="#00e8e8"/><path d="M1 4L4 1 8 1.500 12 6.500 10.500 8 8 6 6 8.500 3 8z" fill="#f4f060" stroke="#a09000" stroke-width=".7"/><path d="M7 3l5 5.500" stroke="#000" stroke-width="1.400"/></svg>
<svg class="a" style="left:116px;top:54px" width="17" height="14" viewBox="0 0 17 14" ><path d="M0.500 6.500L6.500 0.500 16.500 5.500 8.500 12.500Z" fill="#fff" stroke="#000"/><path d="M0.500 7.500L8.500 13.500 16.500 6.500" fill="none" stroke="#0000f0" stroke-width="1.300"/><path d="M11 3L4 9.500M13 4L6 10.500" stroke="#000" fill="none" stroke-width=".9"/></svg>
<div class="a" style="left:140px;top:49px;width:2px;height:22px;border-left:1px solid #a0a0a0;border-right:1px solid #fff"></div>
<svg class="a" style="left:147px;top:52px" width="11" height="16" viewBox="0 0 11 16" ><path d="M0.500 0.500H10.500V15.500H0.500Z" fill="#ffff00" stroke="#000"/><path d="M1 1H4.500V12L2.500 15H1Z" fill="#900000"/><path d="M4.500 1V12" stroke="#000"/><path d="M1 1h3v1.500L2.500 3H1z" fill="#30e0e0"/><path d="M5 5.500h1.500" stroke="#000"/></svg>
<div class="a" style="left:51px;top:43px;width:39px;height:35px;border:2px solid #ff0000;border-radius:6px"></div>
<div class="t" style="left:290px;top:83px;font-size:11.5px;font-weight:bold;color:#b4b4b4;letter-spacing:.1px">Справочник:</div>
<div class="a" style="left:372px;top:78px;width:737px;line-height:13px;font-size:12px;color:#b0b0b0;letter-spacing:.08px;transform:scaleX(.9167);transform-origin:0 0">"Сборники по оценке трудозатрат для расчета стоимости проектно-изыскательских работ объектов ОАО "Газпром". Первая редакция"</div>
<div class="a" style="left:281px;top:111px;width:767px;height:1px;background:#a0a0a0"></div>
<div class="a" style="left:281px;top:112px;width:767px;height:1px;background:#fff"></div>
<div class="a" style="left:283px;top:113px;width:61px;height:21px;background:#f6f6f6;border-left:1px solid #707070;border-top:1px solid #707070;border-right:1px solid #fff;border-bottom:1px solid #fff;box-shadow:inset 1px 1px 0 #a8a8a8"></div>
<div class="t x" style="left:290px;top:117px;letter-spacing:.2px">Расценки</div>
<div class="t x" style="left:360px;top:116px;letter-spacing:.1px">Поправки</div>
<div class="a" style="left:348px;top:113px;width:1px;height:21px;background:#a0a0a0"></div>
<div class="a" style="left:349px;top:113px;width:1px;height:21px;background:#fff"></div>
<div class="a" style="left:420px;top:113px;width:1px;height:21px;background:#a0a0a0"></div>
<div class="a" style="left:421px;top:113px;width:1px;height:21px;background:#fff"></div>
<svg class="a" style="left:286px;top:145px" width="11" height="8" viewBox="0 0 11 8" ><path d="M0.700 0.700H10.300L6.600 4.600V7.400H4.400V4.600Z" fill="#fff" stroke="#000" stroke-width="1.300"/><path d="M6.500 2L5.500 4.500V6.500" stroke="#30a8a8" fill="none"/></svg>
<div class="inp" style="left:298px;width:107px"></div>
<div class="inp" style="left:406px;width:380px"></div>
<div class="inp" style="left:787px;width:86px"></div>
<div class="inp" style="left:874px;width:64px"></div>
<div class="inp" style="left:939px;width:102px"></div>
<div class="t x" style="left:409px;top:142px;letter-spacing:.15px">газопровод</div>
<div class="a" style="left:1043px;top:141px;width:6px;height:17px;border-left:1px solid #c0c0c0;border-bottom:1px solid #808080"></div>
<svg class="a" style="left:1044px;top:147px" width="4" height="7" viewBox="0 0 4 7" ><path d="M3.500 0.500L0.800 3.500 3.500 6.500" fill="none" stroke="#000" stroke-width="1.300"/></svg>
<div class="a" style="left:285px;top:164px;width:757px;height:161px;background:#fff;border-left:1px solid #a0a0a0;border-top:1px solid #a0a0a0"></div>
<div class="c hd" style="left:286px;top:165px;width:12px;height:49px;"></div>
<div class="c hd" style="left:298px;top:165px;width:108px;height:49px;padding-top:19px"><span class="s" style="transform-origin:50% 0">Код</span></div>
<div class="c hd" style="left:406px;top:165px;width:380px;height:49px;padding-top:19px"><span class="s" style="transform-origin:50% 0">Наименование</span></div>
<div class="c hd" style="left:786px;top:165px;width:153px;height:18px;padding-top:2px"><span class="s" style="transform-origin:50% 0">Единица измерения</span></div>
<div class="c hd" style="left:786px;top:183px;width:88px;height:31px;padding-top:10px"><span class="s" style="transform-origin:50% 0">расценки</span></div>
<div class="c hd" style="left:874px;top:183px;width:65px;height:31px;padding-top:3px;line-height:13px"><span class="s" style="transform-origin:50% 0">основного<br>показателя</span></div>
<div class="c hd" style="left:939px;top:165px;width:103px;height:49px;padding-top:11px;line-height:13px"><span class="s" style="transform-origin:50% 0">Множитель<br>стоимости</span></div>
<div class="c hd" style="left:286px;top:214px;width:12px;height:94px;"></div>
<div class="c " style="left:298px;top:214px;width:108px;height:94px;padding-top:2px;letter-spacing:-.4px"><span class="s" style="transform-origin:0 0">3.01-01-001</span></div>
<div class="c " style="left:406px;top:214px;width:380px;height:94px;padding-top:2px;line-height:13px;letter-spacing:.03px"><span class="s" style="transform-origin:0 0">Объекты технологического назначения: Газопровод диаметром до 500<br>мм</span></div>
<div class="c " style="left:786px;top:214px;width:88px;height:94px;padding-top:2px"><span class="s" style="transform-origin:0 0">газопровод</span></div>
<div class="c " style="left:874px;top:214px;width:65px;height:94px;padding-top:2px"><span class="s" style="transform-origin:0 0">км</span></div>
<div class="c r" style="left:939px;top:214px;width:103px;height:94px;padding-top:2px"><span class="s" style="transform-origin:100% 0">Тыс. руб.</span></div>
<svg class="a" style="left:298px;top:214px" width="7" height="7" viewBox="0 0 7 7" ><path d="M0 0H7L0 7Z" fill="#1020e0"/></svg>
<div class="a" style="left:1042px;top:164px;width:6px;height:161px;background:#f0f0f0"></div>
<div class="a" style="left:1043px;top:237px;width:6px;height:15px;background:#e8e8e8;border:1px solid #9a9a9a;border-right:0"></div>
<div class="a" style="left:479px;top:325px;width:388px;height:8px;background:#fff;border:1px solid #a0a0a0"></div>
<div class="a" style="left:494px;top:329px;width:360px;height:1px;background:repeating-linear-gradient(90deg,#3c8cf0 0 1px,transparent 1px 2px)"></div>
<svg class="a" style="left:484px;top:326px" width="8" height="5" viewBox="0 0 8 5" ><path d="M0.5 0.5L4 4 7.5 0.5" fill="none" stroke="#000" stroke-width="1.6"/></svg>
<svg class="a" style="left:858px;top:326px" width="8" height="5" viewBox="0 0 8 5" ><path d="M0.5 0.5L4 4 7.5 0.5" fill="none" stroke="#000" stroke-width="1.6"/></svg>
<div class="a" style="left:285px;top:333px;width:58px;height:22px;background:#f4f4f4;border:2px solid #000;border-radius:3px;box-shadow:inset 1px 1px 0 #808080,inset 2px 2px 0 #c8c8c8"></div>
<div class="t x" style="left:295px;top:337px;letter-spacing:.1px">Детали</div>
<div class="t x" style="left:354px;top:336px">Зависимые</div>
<div class="t x" style="left:434px;top:336px">Комментарий</div>
<div class="t x" style="left:526px;top:336px">Виды работ</div>
<div class="a" style="left:422px;top:333px;width:1px;height:22px;background:#a0a0a0"></div>
<div class="a" style="left:423px;top:333px;width:1px;height:22px;background:#fff"></div>
<div class="a" style="left:514px;top:333px;width:1px;height:22px;background:#a0a0a0"></div>
<div class="a" style="left:515px;top:333px;width:1px;height:22px;background:#fff"></div>
<div class="a" style="left:595px;top:333px;width:1px;height:22px;background:#a0a0a0"></div>
<div class="a" style="left:596px;top:333px;width:1px;height:22px;background:#fff"></div>
<div class="a" style="left:293px;top:366px;width:755px;height:248px;background:#fff"></div>
<div class="a" style="left:293px;top:426px;width:755px;height:1px;background:#909090"></div>
<div class="a" style="left:293px;top:513px;width:755px;height:1px;background:#909090"></div>
<div class="a" style="left:293px;top:366px;width:755px;height:1px;background:#808080"></div>
<div class="a" style="left:293px;top:366px;width:1px;height:51px;background:#808080"></div>
<div class="c hd" style="left:294px;top:367px;width:12px;height:18px;"></div>
<div class="c hd" style="left:306px;top:367px;width:414px;height:18px;padding-top:3px"><span class="s" style="transform-origin:50% 0">Стадии проектирования</span></div>
<div class="c hd" style="left:720px;top:367px;width:314px;height:18px;padding-top:3px"><span class="s" style="transform-origin:50% 0">Процент</span></div>
<div class="c hd" style="left:294px;top:385px;width:12px;height:16px;"></div>
<svg class="a" style="left:297px;top:387px" width="6" height="11" viewBox="0 0 6 11" ><path d="M0 0L6 5.5 0 11Z" fill="#000"/></svg>
<div class="c " style="left:306px;top:385px;width:414px;height:16px;background:#3399ff;color:#fff;padding-left:2px;"><span class="s" style="transform-origin:0 0">Проектная документация</span></div>
<div class="c r" style="left:720px;top:385px;width:314px;height:16px;background:#3399ff;color:#fff;padding-right:2px;"><span class="s" style="transform-origin:100% 0">40</span></div>
<div class="c hd" style="left:294px;top:401px;width:12px;height:16px;"></div>
<div class="c " style="left:306px;top:401px;width:414px;height:16px;background:#fff;color:#000;padding-left:2px;"><span class="s" style="transform-origin:0 0">Рабочая документация</span></div>
<div class="c r" style="left:720px;top:401px;width:314px;height:16px;background:#fff;color:#000;padding-right:2px;"><span class="s" style="transform-origin:100% 0">60</span></div>
<div class="a" style="left:1034px;top:367px;width:14px;height:59px;background:#f0f0f0"></div>
<svg class="a" style="left:1040px;top:374px" width="7" height="4" viewBox="0 0 7 4" ><path d="M0 4L3.5 0.5 7 4Z" fill="#505050"/></svg>
<svg class="a" style="left:1040px;top:415px" width="7" height="4" viewBox="0 0 7 4" ><path d="M0 0.5L3.5 4 7 0.5Z" fill="#505050"/></svg>
<div class="a" style="left:1036px;top:386px;width:14px;height:14px;background:linear-gradient(90deg,#f4f4f4,#dcdcdc);border:1px solid #9a9a9a;border-radius:2px"></div>
<div class="a" style="left:293px;top:429px;width:755px;height:1px;background:#808080"></div>
<div class="a" style="left:293px;top:429px;width:1px;height:83px;background:#808080"></div>
<div class="c hd" style="left:294px;top:430px;width:12px;height:18px;"></div>
<div class="c hd" style="left:306px;top:430px;width:522px;height:18px;padding-top:3px"><span class="s" style="transform-origin:50% 0">Стадии проектирования - Состав проекта</span></div>
<div class="c hd" style="left:828px;top:430px;width:206px;height:18px;padding-top:3px"><span class="s" style="transform-origin:50% 0">Процент</span></div>
<div class="c hd" style="left:294px;top:448px;width:12px;height:16px;"></div>
<svg class="a" style="left:297px;top:450px" width="6" height="11" viewBox="0 0 6 11" ><path d="M0 0L6 5.5 0 11Z" fill="#000"/></svg>
<div class="c " style="left:306px;top:448px;width:522px;height:16px;background:#d8f8ec;color:#000;padding-left:2px;"><span class="s" style="transform-origin:0 0">Проектная документация</span></div>
<div class="c r" style="left:828px;top:448px;width:206px;height:16px;background:#d8f8ec;color:#000;padding-right:2px;"></div>
<div class="c hd" style="left:294px;top:464px;width:12px;height:16px;"></div>
<div class="c " style="left:306px;top:464px;width:522px;height:16px;background:#fff;color:#000;padding-left:15px;"><span class="s" style="transform-origin:0 0">Технологическая часть</span></div>
<div class="c r" style="left:828px;top:464px;width:206px;height:16px;background:#fff;color:#000;padding-right:2px;"><span class="s" style="transform-origin:100% 0">78,3</span></div>
<div class="c hd" style="left:294px;top:480px;width:12px;height:16px;"></div>
<div class="c " style="left:306px;top:480px;width:522px;height:16px;background:#fff;color:#000;padding-left:15px;"><span class="s" style="transform-origin:0 0">Архитектурно-строительная часть</span></div>
<div class="c r" style="left:828px;top:480px;width:206px;height:16px;background:#fff;color:#000;padding-right:2px;"><span class="s" style="transform-origin:100% 0">9,7</span></div>
<div class="c hd" style="left:294px;top:496px;width:12px;height:16px;"></div>
<div class="c " style="left:306px;top:496px;width:522px;height:16px;background:#fff;color:#000;padding-left:15px;"><span class="s" style="transform-origin:0 0">Электрохимзащита</span></div>
<div class="c r" style="left:828px;top:496px;width:206px;height:16px;background:#fff;color:#000;padding-right:2px;"><span class="s" style="transform-origin:100% 0">4,7</span></div>
<div class="a" style="left:1034px;top:430px;width:14px;height:83px;background:#f0f0f0"></div>
<svg class="a" style="left:1040px;top:437px" width="7" height="4" viewBox="0 0 7 4" ><path d="M0 4L3.5 0.5 7 4Z" fill="#505050"/></svg>
<svg class="a" style="left:1040px;top:502px" width="7" height="4" viewBox="0 0 7 4" ><path d="M0 0.5L3.5 4 7 0.5Z" fill="#505050"/></svg>
<div class="a" style="left:1036px;top:449px;width:14px;height:14px;background:linear-gradient(90deg,#f4f4f4,#dcdcdc);border:1px solid #9a9a9a;border-radius:2px"></div>
<div class="a" style="left:293px;top:516px;width:755px;height:1px;background:#808080"></div>
<div class="a" style="left:293px;top:516px;width:1px;height:83px;background:#808080"></div>
<div class="c hd" style="left:294px;top:517px;width:12px;height:18px;"></div>
<div class="c hd" style="left:306px;top:517px;width:346px;height:18px;padding-top:3px"><span class="s" style="transform-origin:50% 0">Натуральный показатель</span></div>
<div class="c hd" style="left:652px;top:517px;width:191px;height:18px;padding-top:3px"><span class="s" style="transform-origin:50% 0">а</span></div>
<div class="c hd" style="left:843px;top:517px;width:191px;height:18px;padding-top:3px"><span class="s" style="transform-origin:50% 0">в</span></div>
<div class="c hd" style="left:294px;top:535px;width:12px;height:16px;"></div>
<svg class="a" style="left:297px;top:537px" width="6" height="11" viewBox="0 0 6 11" ><path d="M0 0L6 5.5 0 11Z" fill="#000"/></svg>
<div class="c " style="left:306px;top:535px;width:346px;height:16px;background:#fff;color:#000;padding-left:2px;"><span class="s" style="transform-origin:0 0">Протяженность (км) - свыше 1 до 5</span></div>
<div class="c r" style="left:652px;top:535px;width:191px;height:16px;background:#fff;color:#000;padding-right:2px;"><span class="s" style="transform-origin:100% 0">58,92</span></div>
<div class="c r" style="left:843px;top:535px;width:191px;height:16px;background:#fff;color:#000;padding-right:2px;"><span class="s" style="transform-origin:100% 0">3,747</span></div>
<div class="c hd" style="left:294px;top:551px;width:12px;height:16px;"></div>
<div class="c " style="left:306px;top:551px;width:346px;height:16px;background:#fff;color:#000;padding-left:2px;"><span class="s" style="transform-origin:0 0">Протяженность (км) - свыше 5 до 20</span></div>
<div class="c r" style="left:652px;top:551px;width:191px;height:16px;background:#fff;color:#000;padding-right:2px;"><span class="s" style="transform-origin:100% 0">62,22</span></div>
<div class="c r" style="left:843px;top:551px;width:191px;height:16px;background:#fff;color:#000;padding-right:2px;"><span class="s" style="transform-origin:100% 0">3,088</span></div>
<div class="c hd" style="left:294px;top:567px;width:12px;height:16px;"></div>
<div class="c " style="left:306px;top:567px;width:346px;height:16px;background:#fff;color:#000;padding-left:2px;"><span class="s" style="transform-origin:0 0">Протяженность (км) - свыше 20 до 50</span></div>
<div class="c r" style="left:652px;top:567px;width:191px;height:16px;background:#fff;color:#000;padding-right:2px;"><span class="s" style="transform-origin:100% 0">74,93</span></div>
<div class="c r" style="left:843px;top:567px;width:191px;height:16px;background:#fff;color:#000;padding-right:2px;"><span class="s" style="transform-origin:100% 0">2,452</span></div>
<div class="c hd" style="left:294px;top:583px;width:12px;height:16px;"></div>
<div class="c " style="left:306px;top:583px;width:346px;height:16px;background:#fff;color:#000;padding-left:2px;"><span class="s" style="transform-origin:0 0">Протяженность (км) - свыше 50 до 100</span></div>
<div class="c r" style="left:652px;top:583px;width:191px;height:16px;background:#fff;color:#000;padding-right:2px;"><span class="s" style="transform-origin:100% 0">118,53</span></div>
<div class="c r" style="left:843px;top:583px;width:191px;height:16px;background:#fff;color:#000;padding-right:2px;"><span class="s" style="transform-origin:100% 0">1,58</span></div>
<div class="a" style="left:1034px;top:517px;width:14px;height:96px;background:#f0f0f0"></div>
<svg class="a" style="left:1040px;top:524px" width="7" height="4" viewBox="0 0 7 4" ><path d="M0 4L3.5 0.5 7 4Z" fill="#505050"/></svg>
<svg class="a" style="left:1040px;top:602px" width="7" height="4" viewBox="0 0 7 4" ><path d="M0 0.5L3.5 4 7 0.5Z" fill="#505050"/></svg>
<div class="a" style="left:1036px;top:536px;width:14px;height:27px;background:linear-gradient(90deg,#f4f4f4,#dcdcdc);border:1px solid #9a9a9a;border-radius:2px"></div>
<div class="a" style="left:1039px;top:545px;width:8px;height:2px;background:#707070;border-bottom:1px solid #fff"></div>
<div class="a" style="left:1039px;top:548px;width:8px;height:2px;background:#707070;border-bottom:1px solid #fff"></div>
<div class="a" style="left:1039px;top:551px;width:8px;height:2px;background:#707070;border-bottom:1px solid #fff"></div>
<div class="a" style="left:2px;top:628px;width:180px;height:1px;background:#a0a0a0"></div>
<div class="a" style="left:182px;top:629px;width:2px;height:17px;background:#fff"></div>
<div class="a" style="left:185px;top:628px;width:175px;height:1px;background:#a0a0a0"></div>
<div class="a" style="left:185px;top:628px;width:1px;height:18px;background:#a0a0a0"></div>
<div class="a" style="left:360px;top:629px;width:2px;height:17px;background:#fff"></div>
<div class="a" style="left:363px;top:628px;width:197px;height:1px;background:#a0a0a0"></div>
<div class="a" style="left:363px;top:628px;width:1px;height:18px;background:#a0a0a0"></div>
<div class="a" style="left:560px;top:629px;width:2px;height:17px;background:#fff"></div>
<div class="a" style="left:563px;top:628px;width:177px;height:1px;background:#a0a0a0"></div>
<div class="a" style="left:563px;top:628px;width:1px;height:18px;background:#a0a0a0"></div>
<div class="a" style="left:740px;top:629px;width:2px;height:17px;background:#fff"></div>
<div class="a" style="left:743px;top:628px;width:305px;height:1px;background:#a0a0a0"></div>
<div class="a" style="left:743px;top:628px;width:1px;height:18px;background:#a0a0a0"></div>
<svg class="a" style="left:4px;top:630px" width="14" height="15" viewBox="0 0 14 15" ><path d="M2.800 7V4.200A4.200 3.200 0 0 1 11.200 4.200V7" fill="none" stroke="#000" stroke-width="3.400"/><path d="M2.800 7V4.200A4.200 3.200 0 0 1 11.200 4.200V7" fill="none" stroke="#b8b8b8" stroke-width="1.400"/><path d="M1.500 6.500H12.500L13.500 8V12L11 14.500H3L0.500 12V8Z" fill="#b0b0b0" stroke="#000"/><path d="M2 8.500H12M2 10.500H12M3.500 12.500H10.500" stroke="#dcdcdc" stroke-width=".8"/><path d="M5.500 8h3v1.500l-1 .500v2.500h-1V10l-1-.500z" fill="#000"/></svg>
<div class="t" style="left:24px;top:630px;font-size:12px;color:#ff0000;letter-spacing:0">- Блокировка</div>
<div class="t" style="left:186px;top:630px;font-size:12px;color:#000">Расценок в справочнике: 692</div>
<svg class="a" style="left:363px;top:629px" width="16" height="17" viewBox="0 0 16 17" ><path d="M8 1h7v12H8z" fill="#fff" stroke="#000" stroke-width="1.400"/><path d="M15.500 2v12H9" fill="none" stroke="#404040" stroke-width=".8"/><path d="M9.500 2.500h4M9.500 4.500h4M9.500 6.500h4M9.500 8.500h4M9.500 10.500h4" stroke="#0000ff"/><path d="M0.500 10.500h5v6M1 12.500h4M1 14.500h4M2.500 11v5" fill="none" stroke="#000" stroke-width=".9" stroke-dasharray="1.500 1"/></svg>
<div class="t" style="left:386px;top:630px;font-size:12px;color:#000">Список выбора пуст</div>
<svg class="a" style="left:520px;top:111px" width="230" height="48" viewBox="0 0 230 48" ><path d="M60.97 31.24 A90.40 17.90 0 1 1 91.23 36.89 L3.00 44.50 Z" fill="#ffffe1" stroke="#000" stroke-width="1.1" stroke-linejoin="miter" stroke-miterlimit="10"/><text transform="scale(.9167,1)" x="148.9" y="20.4" text-anchor="middle" font-family="Liberation Sans,sans-serif" font-size="12" xml:space="preserve">поле Наименование в</text><text transform="scale(.9167,1)" x="148.9" y="33.4" text-anchor="middle" font-family="Liberation Sans,sans-serif" font-size="12" xml:space="preserve">фильтре</text></svg>
<svg class="a" style="left:244px;top:229px" width="103" height="56" viewBox="0 0 103 56" ><path d="M78.66 33.69 A40.70 19.30 0 1 0 61.29 40.78 L99.50 52.50 Z" fill="#ffffe1" stroke="#000" stroke-width="1.1" stroke-linejoin="miter" stroke-miterlimit="10"/><text transform="scale(.9167,1)" x="48.5" y="21.9" text-anchor="middle" font-family="Liberation Sans,sans-serif" font-size="12" xml:space="preserve">расценка</text></svg>
<svg class="a" style="left:879px;top:310px" width="132" height="65" viewBox="0 0 132 65" ><path d="M25.68 40.53 A62.70 21.00 0 1 1 45.33 44.30 L8.00 61.00 Z" fill="#ffffe1" stroke="#000" stroke-width="1.1" stroke-linejoin="miter" stroke-miterlimit="10"/><text transform="scale(.9167,1)" x="72.2" y="21.4" text-anchor="middle" font-family="Liberation Sans,sans-serif" font-size="12" xml:space="preserve">коэффициенты</text><text transform="scale(.9167,1)" x="72.2" y="34.4" text-anchor="middle" font-family="Liberation Sans,sans-serif" font-size="12" xml:space="preserve">стадийности</text></svg>
<svg class="a" style="left:19px;top:477px" width="306" height="65" viewBox="0 0 306 65" ><path d="M202.78 20.59 A103.80 29.00 0 1 0 210.43 28.35 L302.00 20.40 Z" fill="#ffffe1" stroke="#000" stroke-width="1.1" stroke-linejoin="miter" stroke-miterlimit="10"/><text transform="scale(.9167,1)" x="118.4" y="22.9" text-anchor="middle" font-family="Liberation Sans,sans-serif" font-size="12" xml:space="preserve">относительная стоимость</text><text transform="scale(.9167,1)" x="118.4" y="35.9" text-anchor="middle" font-family="Liberation Sans,sans-serif" font-size="12" xml:space="preserve">разделов проектной</text><text transform="scale(.9167,1)" x="118.4" y="48.9" text-anchor="middle" font-family="Liberation Sans,sans-serif" font-size="12" xml:space="preserve">документации</text></svg>
<svg class="a" style="left:148px;top:577px" width="214" height="66" viewBox="0 0 214 66" ><path d="M137.13 13.76 A76.30 29.50 0 1 0 152.24 23.68 L210.50 9.50 Z" fill="#ffffe1" stroke="#000" stroke-width="1.1" stroke-linejoin="miter" stroke-miterlimit="10"/><text transform="scale(.9167,1)" x="88.4" y="24.9" text-anchor="middle" font-family="Liberation Sans,sans-serif" font-size="12" xml:space="preserve">диапазоны</text><text transform="scale(.9167,1)" x="88.4" y="37.9" text-anchor="middle" font-family="Liberation Sans,sans-serif" font-size="12" xml:space="preserve">натурального</text><text transform="scale(.9167,1)" x="88.4" y="50.9" text-anchor="middle" font-family="Liberation Sans,sans-serif" font-size="12" xml:space="preserve">показателя X</text></svg>
<svg class="a" style="left:536px;top:536px" width="265" height="103" viewBox="0 0 265 103" ><path d="M170.57 22.38 A107.30 42.30 0 1 0 202.98 36.01 L261.00 3.00 Z" fill="#ffffe1" stroke="#000" stroke-width="1.1" stroke-linejoin="miter" stroke-miterlimit="10"/><text transform="scale(.9167,1)" x="121.1" y="39.9" text-anchor="middle" font-family="Liberation Sans,sans-serif" font-size="12" xml:space="preserve">значение стоимостных</text><text transform="scale(.9167,1)" x="121.1" y="52.9" text-anchor="middle" font-family="Liberation Sans,sans-serif" font-size="12" xml:space="preserve">показателей а и в,&#160; в</text><text transform="scale(.9167,1)" x="121.1" y="65.9" text-anchor="middle" font-family="Liberation Sans,sans-serif" font-size="12" xml:space="preserve">зависимости от значения</text><text transform="scale(.9167,1)" x="121.1" y="78.9" text-anchor="middle" font-family="Liberation Sans,sans-serif" font-size="12" xml:space="preserve">натурального показателя X</text></svg>
<div class="a" style="left:0;top:0;width:1050px;height:2px;background:#000"></div>
<div class="a" style="left:0;top:0;width:2px;height:700px;background:#000"></div>
<div class="a" style="left:1048px;top:0;width:2px;height:700px;background:#000"></div>
<div class="a" style="left:0;top:698px;width:1050px;height:2px;background:#000"></div>
</body></html>
